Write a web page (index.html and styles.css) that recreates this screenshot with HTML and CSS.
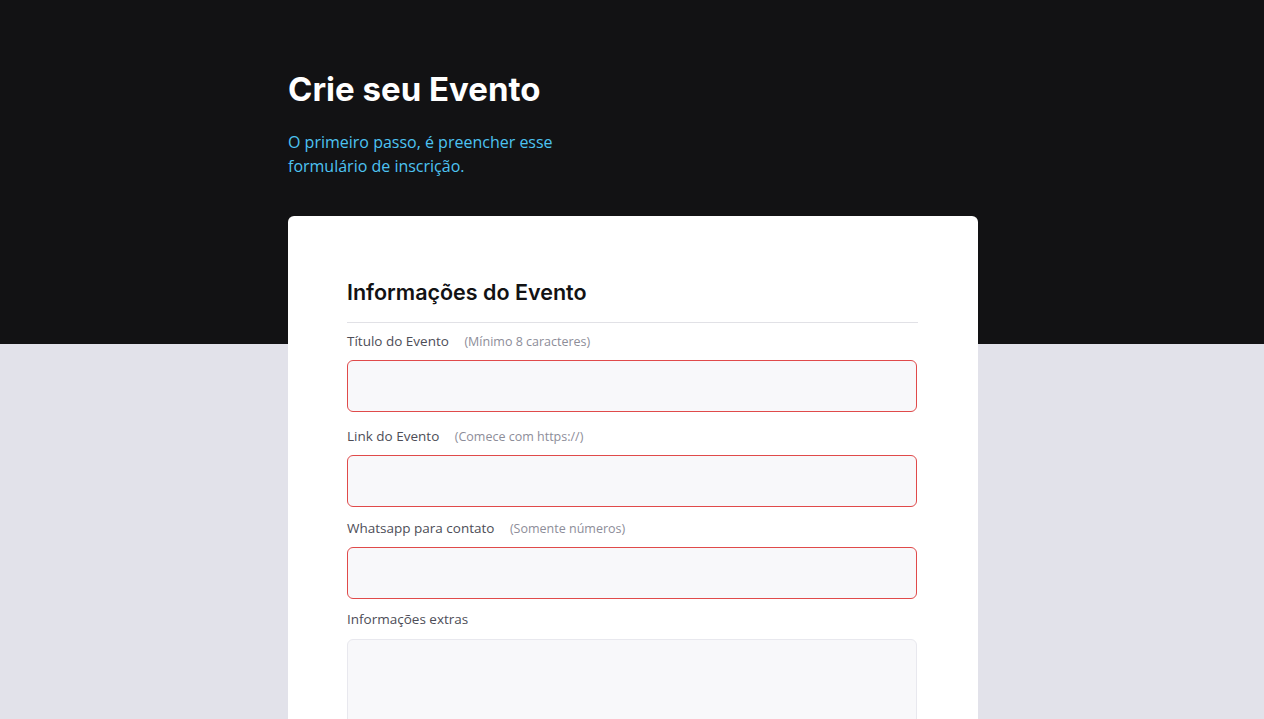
FILE: index.html
```html
<!DOCTYPE html>
<html lang="pt-BR">
<head>
<meta charset="utf-8">
<title>Crie seu Evento</title>
<link rel="stylesheet" href="styles.css">
</head>
<body>
<div class="page">
  <header class="hero">
    <div class="container">
      <h1 class="hero-title">Crie seu Evento</h1>
      <p class="hero-sub">O primeiro passo, é preencher esse formulário de inscrição.</p>
    </div>
  </header>
  <main class="main">
    <div class="container">
      <form class="card">
        <h2 class="card-title">Informações do Evento</h2>
        <div class="field">
          <label class="label">Título do Evento <span class="hint">(Mínimo 8 caracteres)</span></label>
          <input class="input invalid" type="text">
        </div>
        <div class="field">
          <label class="label">Link do Evento <span class="hint">(Comece com https://)</span></label>
          <input class="input invalid" type="text">
        </div>
        <div class="field">
          <label class="label">Whatsapp para contato <span class="hint">(Somente números)</span></label>
          <input class="input invalid" type="text">
        </div>
        <div class="field field-extra">
          <label class="label">Informações extras</label>
          <textarea class="input textarea"></textarea>
        </div>
      </form>
    </div>
  </main>
</div>
</body>
</html>
```
FILE: styles.css
```css
* { box-sizing: border-box; }
html, body { margin: 0; padding: 0; }
body {
  background: #e2e2ea;
  font-family: "Open Sans", "Noto Sans", sans-serif;
  overflow: hidden;
}
.page { min-height: 719px; }
.container {
  width: 690px;
  margin-left: 288px;
}
.hero {
  background: #121214;
  height: 344px;
  padding-top: 70px;
}
.hero-title {
  margin: 0;
  font-family: "Inter", "Liberation Sans", sans-serif;
  font-weight: 700;
  font-size: 33px;
  line-height: 38px;
  color: #ffffff;
  letter-spacing: 0;
}
.hero-sub {
  margin: 22px 0 0;
  width: 280px;
  font-size: 16px;
  line-height: 24px;
  color: #4dc3f2;
}
.main { margin-top: -128px; }
.card {
  background: #ffffff;
  border-radius: 6px;
  padding: 60px 60px 40px 59px;
  min-height: 600px;
}
.card-title {
  margin: 0;
  padding: 2px 0 16px;
  font-family: "Inter", "Liberation Sans", sans-serif;
  font-weight: 600;
  font-size: 21.5px;
  line-height: 28px;
  color: #121214;
  border-bottom: 1px solid #e1e1e6;
  width: 571px;
}
.field {
  display: flex;
  flex-direction: column;
  margin-top: 8px;
}
.field + .field { margin-top: 11px; }
.field:nth-child(3) { margin-top: 14px; }
.field.field-extra { margin-top: 10px; }
.field-extra .label { margin-bottom: 10px; }
.label {
  font-size: 13.5px;
  line-height: 20px;
  color: #4d4d57;
  margin-bottom: 8px;
}
.hint {
  margin-left: 12px;
  font-size: 12.5px;
  color: #8d8d99;
}
.input {
  width: 570px;
  height: 52px;
  border: 1px solid #e8e8ee;
  border-radius: 6px;
  background: #f8f8fa;
  font: inherit;
  outline: none;
}
.input.invalid { border-color: #e04a4a; }
.textarea { height: 160px; resize: none; }
```
